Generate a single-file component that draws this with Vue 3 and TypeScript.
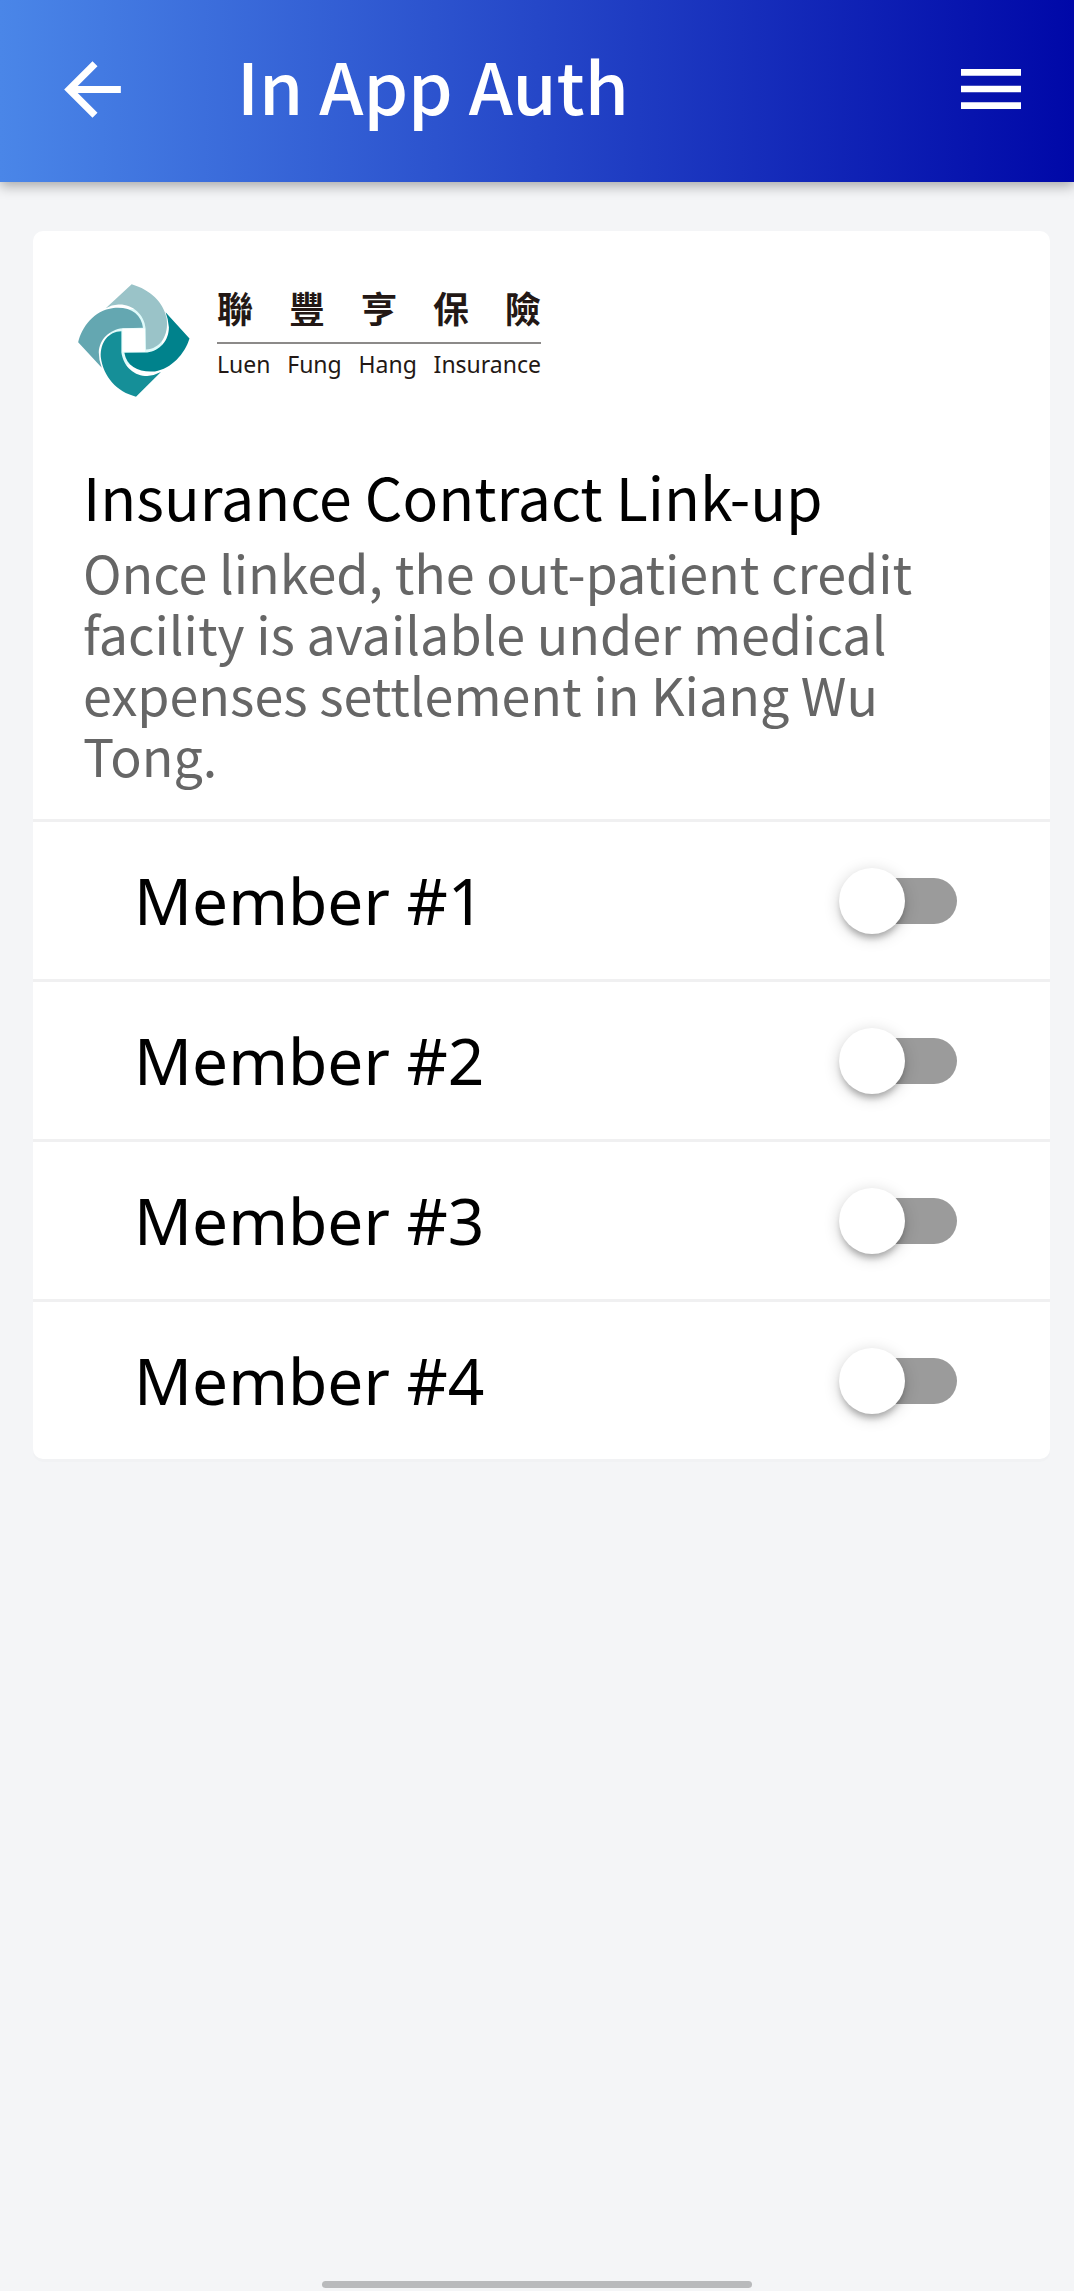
<script setup lang="ts">
import { reactive } from 'vue'

interface Member {
  id: number
  name: string
  linked: boolean
}

const brandCharacters: string[] = ['聯', '豐', '亨', '保', '險']
const brandWords: string[] = ['Luen', 'Fung', 'Hang', 'Insurance']

const members = reactive<Member[]>(
  [1, 2, 3, 4].map((id) => ({ id, name: `Member #${id}`, linked: false })),
)
</script>

<template>
  <div class="screen">
    <header class="app-bar">
      <button class="icon-button" type="button" aria-label="Back">
        <svg class="icon-back" viewBox="0 0 24 24" aria-hidden="true">
          <path d="M20 11H7.83l5.59-5.59L12 4l-8 8 8 8 1.41-1.41L7.83 13H20v-2z" />
        </svg>
      </button>
      <h1 class="app-title">In App Auth</h1>
      <button class="icon-button" type="button" aria-label="Menu">
        <svg class="icon-menu" viewBox="0 0 24 24" aria-hidden="true">
          <path d="M3 18h18v-2H3v2zm0-5h18v-2H3v2zm0-7v2h18V6H3z" />
        </svg>
      </button>
    </header>

    <main class="content">
      <section class="card">
        <div class="brand">
          <svg class="brand-mark" viewBox="54 70 336 340" aria-hidden="true">
            <path fill="#dffafa" d="M150 150L300 140 310 300 150 320z" />
            <path fill="#9ac3c8" d="M215 71C272 88 310 125 320 172C328 225 300 265 258 267L257 205C254 160 215 130 175 132Q155 133 137 143Z" />
            <path fill="#64a7b1" d="M125 322L54 245C65 200 100 150 160 142C210 137 245 160 249 202L187 203C150 207 118 235 116 275Q116 300 125 322Z" />
            <path fill="#158f98" d="M228 409C170 395 130 350 122 290C120 245 145 213 184 212L184 275C190 320 225 347 262 347Q285 345 303 335Z" />
            <path fill="#00828c" d="M317 155L389 234C375 280 335 325 285 333C240 337 200 320 193 277L262 276C300 271 327 240 327 200Q325 175 317 155Z" />
            <path fill="#ffffff" d="M187 204H255V274H187z" />
          </svg>
          <div class="brand-name">
            <div class="brand-chinese" lang="zh-Hant">
              <span v-for="character in brandCharacters" :key="character">{{ character }}</span>
            </div>
            <div class="brand-latin">
              <span v-for="word in brandWords" :key="word">{{ word }}</span>
            </div>
          </div>
        </div>

        <div class="intro">
          <h2 class="intro-title">Insurance Contract Link-up</h2>
          <p class="intro-text">
            Once linked, the out-patient credit facility is available under medical expenses
            settlement in Kiang Wu Tong.
          </p>
        </div>

        <ul class="members">
          <li v-for="member in members" :key="member.id" class="member">
            <label class="member-name" :for="`member-${member.id}`">{{ member.name }}</label>
            <input
              :id="`member-${member.id}`"
              v-model="member.linked"
              class="toggle"
              type="checkbox"
              role="switch"
            />
          </li>
        </ul>
      </section>
    </main>

    <div class="home-indicator"></div>
  </div>
</template>

<style>
body {
  margin: 0;
  background: #f4f5f7;
}
</style>

<style scoped>
.screen {
  display: flex;
  flex-direction: column;
  min-height: 100vh;
  box-sizing: border-box;
  background: #f4f5f7;
  color: #000;
  font-family: 'Noto Sans', 'Noto Sans CJK TC', sans-serif;
}

.app-bar {
  display: flex;
  align-items: center;
  height: 182px;
  box-sizing: border-box;
  padding: 0 43px 4px 50px;
  background: linear-gradient(90deg, #4a86e8, #0008a8);
  box-shadow: 0 4px 12px rgba(0, 0, 0, 0.32);
  color: #fff;
}

.icon-button {
  display: flex;
  padding: 0;
  border: 0;
  background: none;
  color: inherit;
  cursor: pointer;
}

.icon-button svg {
  fill: currentColor;
}

.icon-back {
  width: 85px;
  height: 85px;
}

.icon-menu {
  width: 80px;
  height: 80px;
}

.app-title {
  flex: 1;
  margin: 0 0 0 102px;
  padding-bottom: 10px;
  font-family: 'Noto Sans CJK TC', sans-serif;
  font-size: 71px;
  font-weight: 500;
  line-height: 80px;
}

.content {
  padding: 49px 24px 0 33px;
}

.card {
  border-radius: 10px;
  background: #fff;
  box-shadow: 0 3px 0 #f1f2f4;
}

.brand {
  display: flex;
  gap: 27px;
  padding: 53px 45px 0;
}

.brand-mark {
  width: 112px;
  height: 113px;
}

.brand-name {
  width: 324px;
  color: #231815;
}

.brand-chinese {
  display: flex;
  justify-content: space-between;
  padding-bottom: 12px;
  border-bottom: 2px solid #8c8a89;
  font-family: 'Noto Sans CJK TC', sans-serif;
  font-size: 36px;
  font-weight: 700;
  line-height: 46px;
}

.brand-latin {
  display: flex;
  justify-content: space-between;
  padding-top: 5px;
  font-size: 23px;
  line-height: 30px;
}

.intro {
  padding: 59px 50px 34px;
}

.intro-title,
.intro-text {
  margin: 0;
  font-family: 'Noto Sans CJK TC', sans-serif;
  font-weight: 400;
}

.intro-title {
  padding-bottom: 5px;
  font-size: 59px;
  line-height: 80px;
}

.intro-text {
  color: #666;
  font-size: 52px;
  line-height: 61px;
}

.members {
  margin: 0;
  padding: 0;
  list-style: none;
}

.member {
  display: flex;
  align-items: center;
  justify-content: space-between;
  height: 160px;
  box-sizing: border-box;
  padding: 0 93px 0 101px;
  border-top: 3px solid #f0f0f1;
}

.member-name {
  font-size: 64px;
  line-height: 80px;
}

.toggle {
  position: relative;
  width: 112px;
  height: 46px;
  margin: 0;
  border-radius: 23px;
  background: #9b9b9b;
  appearance: none;
  cursor: pointer;
}

.toggle::before {
  content: '';
  position: absolute;
  top: -10px;
  left: -6px;
  width: 66px;
  height: 66px;
  border-radius: 50%;
  background: #fff;
  box-shadow:
    0 6px 6px -2px rgba(0, 0, 0, 0.25),
    0 3px 16px rgba(0, 0, 0, 0.18);
}

.toggle:checked {
  background: #7c9fe8;
}

.toggle:checked::before {
  left: 52px;
  background: #2450c8;
}

.home-indicator {
  width: 40%;
  height: 7px;
  margin: auto auto 3px;
  border-radius: 4px;
  background: #b9babc;
}
</style>
